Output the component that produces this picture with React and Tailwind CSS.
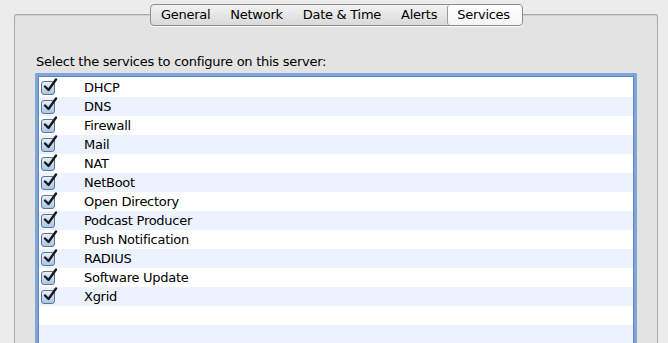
const tabs = ["General", "Network", "Date & Time", "Alerts", "Services"];
const services = [
  "DHCP",
  "DNS",
  "Firewall",
  "Mail",
  "NAT",
  "NetBoot",
  "Open Directory",
  "Podcast Producer",
  "Push Notification",
  "RADIUS",
  "Software Update",
  "Xgrid",
];

function Check() {
  return (
    <span className="relative block h-[14px] w-[14px] rounded-[3px] border border-[#5a7396] bg-gradient-to-b from-[#e6f0fb] to-[#a9c6e8]">
      <svg viewBox="0 0 16 16" className="absolute -top-[4px] left-[0px] h-[16px] w-[16px]">
        <path d="M3 8.5 L6.5 12 L14 1.5" fill="none" stroke="#1a1a1a" strokeWidth="2.4" strokeLinecap="round" strokeLinejoin="round" />
      </svg>
    </span>
  );
}

export default function App() {
  const rows = [...services, "", ""];
  return (
    <div className="h-[343px] w-[668px] overflow-hidden bg-[#ececec] pt-[14px] pl-[14px] pr-[10px] text-[13px] tracking-[-0.27px] text-black" style={{ fontFamily: '"Lucida Grande", "DejaVu Sans", sans-serif' }}>
      <div className="relative h-[340px] rounded-t-[3px] border border-[#a9a9a9] border-b-0 bg-[#e3e3e3] shadow-[inset_0_1px_0_#cfcfcf]">
        <div className="absolute -top-[11px] left-[135px] flex h-[22px] overflow-hidden rounded-[4px] border border-[#8d8d8d] bg-gradient-to-b from-[#f3f3f3] to-[#d9d9d9] shadow-[0_1px_0_#fafafa]">
          {tabs.map((t) => (
            <div
              key={t}
              className={
                t === "Services"
                  ? "flex items-center rounded-[3px] border-l border-[#9b9b9b] bg-gradient-to-b from-white to-[#f5f5f5] pl-[9px] pr-[12px]"
                  : "flex items-center px-[10px] first:pl-[10px]"
              }
            >
              {t}
            </div>
          ))}
        </div>
        <div className="pl-[21px] pt-[39px] leading-[16px]">Select the services to configure on this server:</div>
        <div className="ml-[20px] mt-[3px] w-[602px] border-[3px] border-b-0 border-[#7ea5d6] rounded-t-[2px]">
          <div className="border border-b-0 border-[#5f87bd] bg-white pt-[1px]">
            {rows.map((s, i) => (
              <div key={i} className={`flex h-[19px] items-center ${i % 2 ? "bg-[#edf3fe]" : "bg-white"}`}>
                <div className="w-[45px] pl-[2px]">{s && <Check />}</div>
                <div className="leading-[19px]">{s}</div>
              </div>
            ))}
          </div>
        </div>
      </div>
    </div>
  );
}
